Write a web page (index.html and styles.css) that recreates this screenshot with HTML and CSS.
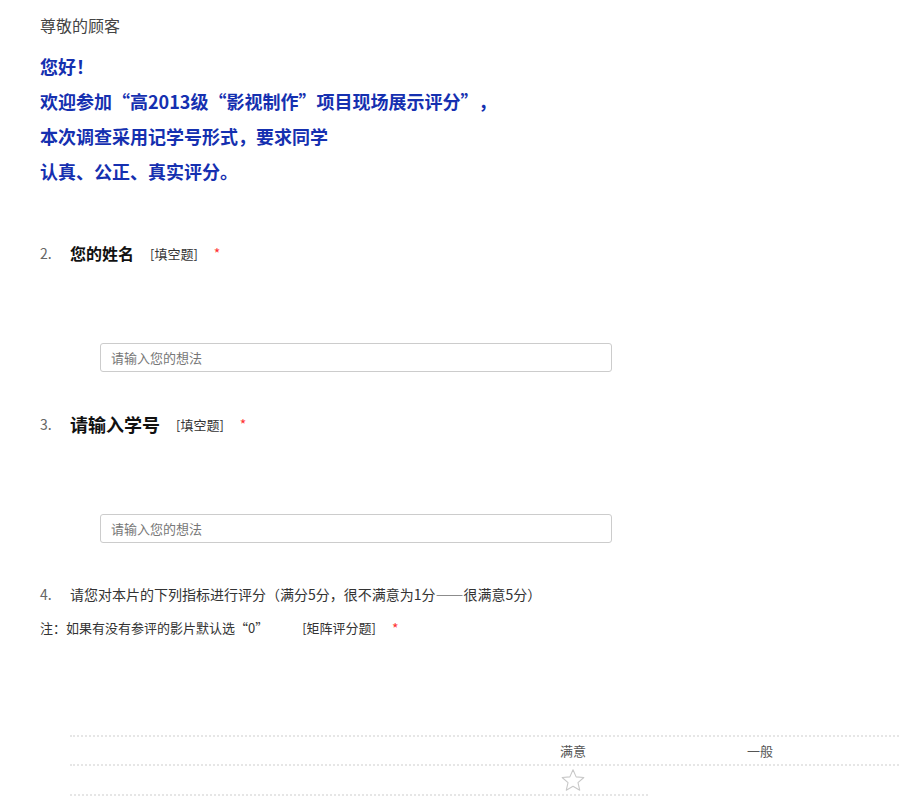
FILE: index.html
```html
<!DOCTYPE html>
<html lang="zh-CN">
<head>
  <meta charset="UTF-8">
  <title>问卷</title>
  <link rel="stylesheet" href="styles.css">
</head>
<body>
  <div class="survey">
    <!-- Intro -->
    <div class="intro">
      <div class="greet">尊敬的顾客</div>
      <div class="welcome">
        <p>您好！</p>
        <p>欢迎参加“高2013级“影视制作”项目现场展示评分”，</p>
        <p>本次调查采用记学号形式，要求同学</p>
        <p>认真、公正、真实评分。</p>
      </div>
    </div>

    <!-- Q2 -->
    <div class="question q-name">
      <div class="q-title">
        <span class="q-num">2.</span>
        <span class="q-text">您的姓名</span>
        <span class="q-type">[填空题]</span>
        <span class="req">*</span>
      </div>
      <div class="q-body">
        <input class="text-input" type="text" placeholder="请输入您的想法">
      </div>
    </div>

    <!-- Q3 -->
    <div class="question q-id">
      <div class="q-title">
        <span class="q-num">3.</span>
        <span class="q-text big">请输入学号</span>
        <span class="q-type">[填空题]</span>
        <span class="req">*</span>
      </div>
      <div class="q-body">
        <input class="text-input" type="text" placeholder="请输入您的想法">
      </div>
    </div>

    <!-- Q4 -->
    <div class="question q-matrix">
      <div class="q-title small">
        <span class="q-num">4.</span>
        <span class="q-plain">请您对本片的下列指标进行评分（满分5分，很不满意为1分——很满意5分）</span>
      </div>
      <div class="q-note">
        <span>注：如果有没有参评的影片默认选“0”</span>
        <span class="q-type">[矩阵评分题]</span>
        <span class="req">*</span>
      </div>

      <div class="matrix">
        <div class="m-row m-head">
          <div class="m-label"></div>
          <div class="m-cell">满意</div>
          <div class="m-cell wide">一般</div>
        </div>
        <div class="m-row m-stars">
          <div class="m-label"></div>
          <div class="m-cell">
            <svg class="star" viewBox="0 0 24 24" width="26" height="26">
              <path d="M12 2.5l2.9 6.6 7.1.6-5.4 4.7 1.6 7-6.2-3.7-6.2 3.7 1.6-7L2 9.7l7.1-.6z" fill="none" stroke="#c8c8c8" stroke-width="1" stroke-linejoin="round"/>
            </svg>
          </div>
        </div>
      </div>
    </div>
  </div>
</body>
</html>
```

FILE: styles.css
```css
/* General */
body {
  margin: 0;
  font-family: "Microsoft YaHei", "Noto Sans CJK SC", sans-serif;
  color: #333;
  background: #fff;
  overflow: hidden;
  text-spacing-trim: space-all;
}

.survey {
  padding: 15px 0 0 40px;
}

/* Intro */
.greet {
  font-size: 16px;
  line-height: 20px;
  color: #444;
}

.welcome {
  margin-top: 14px;
  color: #1530b0;
  font-weight: bold;
  font-size: 18px;
}

.welcome p {
  margin: 0;
  line-height: 35px;
}

/* Questions */
.question {
  margin-top: 52px;
}

.q-title {
  display: flex;
  align-items: center;
  height: 24px;
}

.q-num {
  width: 30px;
  font-size: 14px;
  color: #666;
}

.q-text {
  font-size: 16px;
  font-weight: bold;
  color: #111;
}

.q-text.big {
  font-size: 18px;
}

.q-type {
  font-size: 13px;
  color: #333;
  margin-left: 16px;
}

.req {
  color: #f33;
  font-size: 14px;
  margin-left: 16px;
}

.q-body {
  padding: 78px 0 0 60px;
}

.text-input {
  display: block;
  box-sizing: border-box;
  width: 512px;
  height: 29px;
  border: 1px solid #ccc;
  border-radius: 3px;
  padding: 0 10px;
  font-family: inherit;
  font-size: 13px;
  outline: none;
}

.text-input::placeholder {
  color: #777;
}

.q-id {
  margin-top: 40px;
}

/* Matrix question */
.q-matrix {
  margin-top: 40px;
}

.q-title.small {
  height: 22px;
}

.q-plain {
  font-size: 14px;
  color: #333;
}

.q-note {
  display: flex;
  align-items: center;
  margin-top: 14px;
  font-size: 13px;
  line-height: 18px;
  color: #333;
}

.q-note .q-type {
  margin-left: 34px;
}

.matrix {
  margin: 98px 0 0 30px;
  width: 900px;
}

.m-row {
  display: flex;
  align-items: center;
  height: 27px;
  border-top: 2px dotted #e6e6e6;
}

.m-head {
  width: 900px;
  border-bottom: 2px dotted #e6e6e6;
}

.m-stars {
  border-top: none;
  width: 578px;
  height: 28px;
  border-bottom: 2px dotted #e6e6e6;
}

.m-label {
  width: 428px;
}

.m-cell {
  width: 150px;
  text-align: center;
  font-size: 13px;
  color: #555;
}

.m-cell.wide {
  width: 224px;
}

.star {
  display: block;
  margin: 0 auto;
}
```
